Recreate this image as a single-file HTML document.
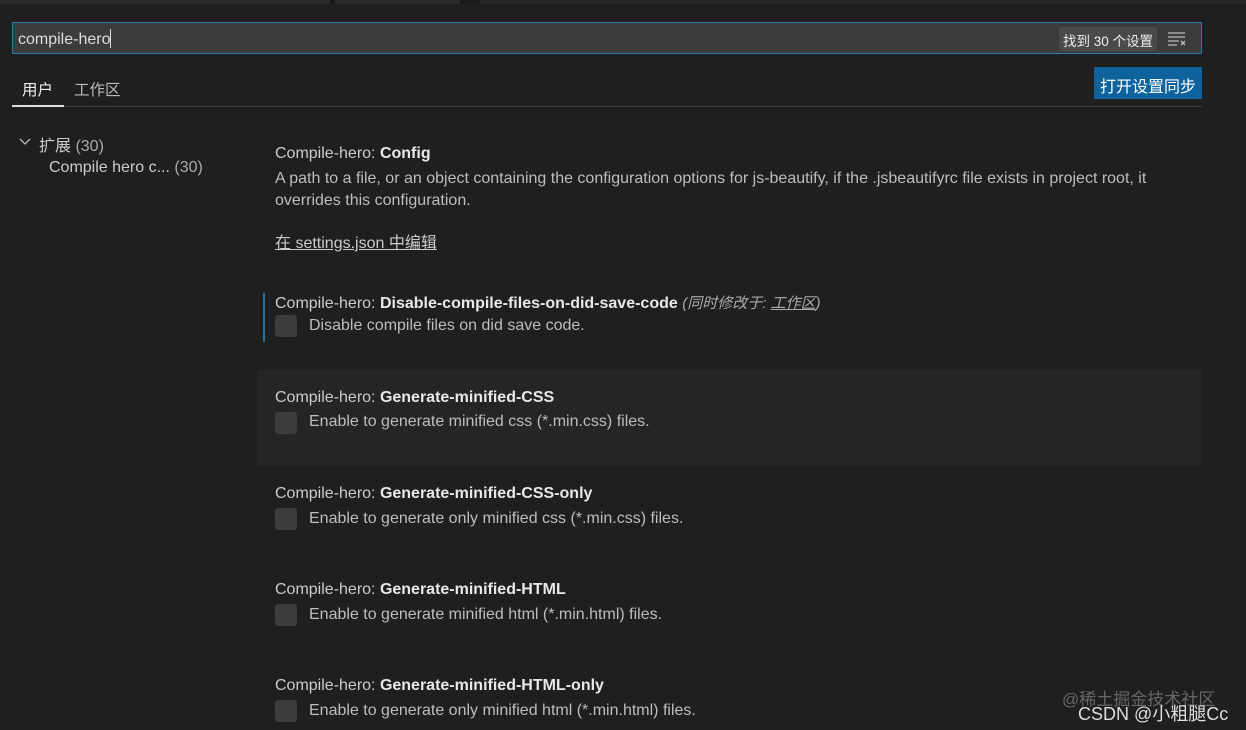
<!DOCTYPE html>
<html><head><meta charset="utf-8"><style>
*{margin:0;padding:0;box-sizing:border-box}
body{width:1246px;height:730px;background:#1f1f1f;color:#ccc;font-family:"Liberation Sans","Noto Sans CJK SC",sans-serif;font-size:15px;position:relative;overflow:hidden}
.a{position:absolute;white-space:nowrap}
.topbar{position:absolute;left:0;top:0;width:1246px;height:4px;background:#1a1a1a}
.search{position:absolute;left:12px;top:22px;width:1190px;height:32px;background:#3c3c3c;border:1px solid #2b79a8}
.cb{position:absolute;width:22px;height:22px;background:#3c3c3c;border-radius:3px}
.t{color:#ccc;font-size:16px}
.t b{color:#e8e8e8}
.d{color:#bdbdbd;font-size:16px}
</style></head><body>
<div class="topbar"></div>
<div class="a" style="left:0;top:0;width:330px;height:4px;background:#2a2a2a"></div>
<div class="a" style="left:335px;top:0;width:125px;height:4px;background:#2a2a2a"></div>
<div class="a" style="left:480px;top:0;width:766px;height:4px;background:#262626"></div>
<div class="search"></div>
<div class="a" style="left:18px;top:29px;color:#ddd;font-size:16px">compile-hero<span style="display:inline-block;width:1px;height:19px;background:#ddd;vertical-align:-4px"></span></div>
<div class="a" style="left:1059px;top:27px;height:24px;padding:3px 4px;background:#4a4a4a;border-radius:2px;color:#eee;font-size:13.5px">找到 30 个设置</div>
<svg class="a" style="left:1166px;top:30px" width="22" height="16" viewBox="0 0 22 16"><g stroke="#bbb" stroke-width="1.3"><path d="M2 3h17M2 7h17M2 11h11M2 15h9"/><path d="M15 11l4 4M19 11l-4 4"/></g></svg>
<div class="a" style="left:22px;top:78px;color:#eee;font-size:15.5px">用户</div>
<div class="a" style="left:74px;top:78px;color:#bbb;font-size:15.5px">工作区</div>
<div class="a" style="left:12px;top:106px;width:1190px;height:1px;background:#3d3d3d"></div>
<div class="a" style="left:12px;top:105px;width:52px;height:2px;background:#ddd"></div>
<div class="a" style="left:1094px;top:67px;width:108px;height:32px;background:#0e639c;color:#fff;font-size:16px;padding-top:6px;text-align:center">打开设置同步</div>
<svg class="a" style="left:18px;top:136px" width="14" height="12" viewBox="0 0 14 12"><path d="M2 3l5 5 5-5" stroke="#bbb" stroke-width="1.3" fill="none"/></svg>
<div class="a" style="left:39px;top:132px;font-size:16px;color:#ccc">扩展 <span style="color:#aaa">(30)</span></div>
<div class="a" style="left:49px;top:159px;font-size:16px;color:#ccc">Compile hero c... <span style="color:#aaa">(30)</span></div>

<div class="a t" style="left:275px;top:145px">Compile-hero: <b>Config</b></div>
<div class="a d" style="left:275px;top:168px;line-height:22px;white-space:normal;width:910px">A path to a file, or an object containing the configuration options for js-beautify, if the .jsbeautifyrc file exists in project root, it overrides this configuration.</div>
<div class="a d" style="left:275px;top:229px;text-decoration:underline;color:#ccc">在 settings.json 中编辑</div>

<div class="a" style="left:263px;top:293px;width:2px;height:49px;background:#2b6f96"></div>
<div class="a t" style="left:275px;top:292px">Compile-hero: <b>Disable-compile-files-on-did-save-code</b> <i style="color:#aaa;font-size:15px">(同时修改于: <u>工作区</u>)</i></div>
<div class="cb" style="left:275px;top:315px"></div>
<div class="a d" style="left:309px;top:317px">Disable compile files on did save code.</div>

<div class="a" style="left:258px;top:370px;width:944px;height:96px;background:#252525"></div>
<div class="a t" style="left:275px;top:389px">Compile-hero: <b>Generate-minified-CSS</b></div>
<div class="cb" style="left:275px;top:412px"></div>
<div class="a d" style="left:309px;top:413px">Enable to generate minified css (*.min.css) files.</div>

<div class="a t" style="left:275px;top:485px">Compile-hero: <b>Generate-minified-CSS-only</b></div>
<div class="cb" style="left:275px;top:508px"></div>
<div class="a d" style="left:309px;top:510px">Enable to generate only minified css (*.min.css) files.</div>

<div class="a t" style="left:275px;top:677px;top:677px"></div>
<div class="a t" style="left:275px;top:581px">Compile-hero: <b>Generate-minified-HTML</b></div>
<div class="cb" style="left:275px;top:604px"></div>
<div class="a d" style="left:309px;top:606px">Enable to generate minified html (*.min.html) files.</div>

<div class="a t" style="left:275px;top:677px">Compile-hero: <b>Generate-minified-HTML-only</b></div>
<div class="cb" style="left:275px;top:700px"></div>
<div class="a d" style="left:309px;top:702px">Enable to generate only minified html (*.min.html) files.</div>

<div class="a" style="left:1062px;top:685px;color:#666;font-size:17px">@稀土掘金技术社区</div>
<div class="a" style="left:1078px;top:700px;color:#ddd;font-size:18px">CSDN @小粗腿Cc</div>
</body></html>
